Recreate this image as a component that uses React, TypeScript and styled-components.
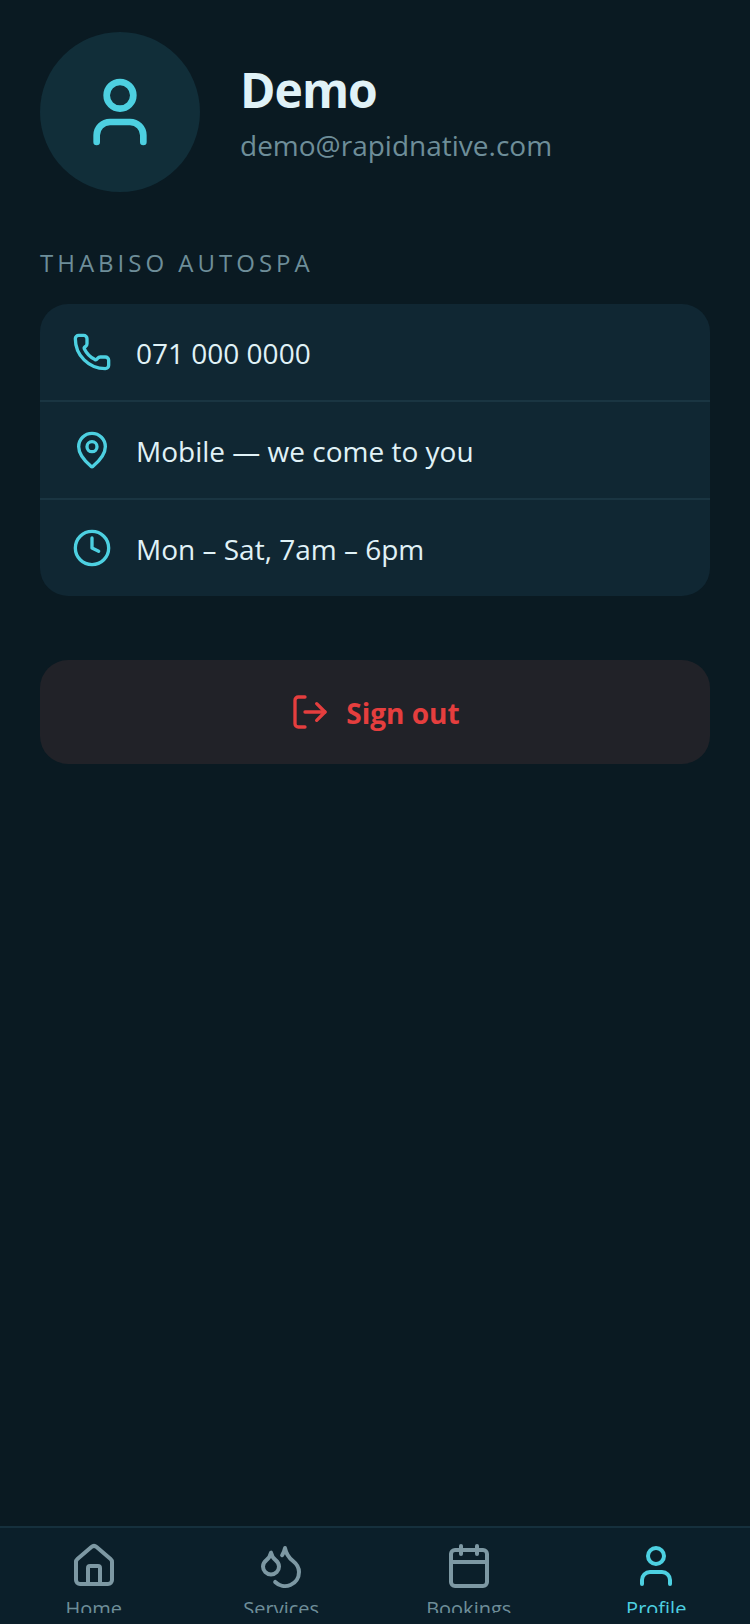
import React from "react";
import styled, { createGlobalStyle } from "styled-components";
import { Calendar, Clock, Droplets, House, LogOut, MapPin, Phone, User } from "lucide-react";

const GlobalStyle = createGlobalStyle`
	html, body {
		margin: 0;
		padding: 0;
		background: #0a1a22;
	}
	* {
		box-sizing: border-box;
	}
`;

const infoRows = [
	{ icon: Phone, text: "071 000 0000" },
	{ icon: MapPin, text: "Mobile — we come to you" },
	{ icon: Clock, text: "Mon – Sat, 7am – 6pm" },
];

const tabs = [
	{ icon: House, label: "Home" },
	{ icon: Droplets, label: "Services" },
	{ icon: Calendar, label: "Bookings" },
	{ icon: User, label: "Profile", active: true },
];

export default function App() {
	return (
		<Screen>
			<GlobalStyle />
			<Content>
				<Header>
					<Avatar>
						<User size={80} color="#4dd0e1" strokeWidth={2} />
					</Avatar>
					<div>
						<Name>Demo</Name>
						<Email>demo@rapidnative.com</Email>
					</div>
				</Header>

				<SectionLabel>THABISO AUTOSPA</SectionLabel>

				<InfoCard>
					{infoRows.map(({ icon: Icon, text }) => (
						<InfoRow key={text}>
							<Icon size={40} color="#4dd0e1" strokeWidth={2} />
							<InfoText>{text}</InfoText>
						</InfoRow>
					))}
				</InfoCard>

				<SignOut>
					<LogOut size={40} color="#e53e3e" strokeWidth={2} />
					<SignOutText>Sign out</SignOutText>
				</SignOut>
			</Content>

			<TabBar>
				{tabs.map(({ icon: Icon, label, active }) => (
					<Tab key={label}>
						<Icon size={48} color={active ? "#4dd0e1" : "#7d98a3"} strokeWidth={2} />
						<TabLabel $active={active}>{label}</TabLabel>
					</Tab>
				))}
			</TabBar>
		</Screen>
	);
}

const Screen = styled.div`
	display: flex;
	flex-direction: column;
	height: 1624px;
	width: 750px;
	overflow: hidden;
	background: #0a1a22;
	font-family: "Open Sans", "Noto Sans", sans-serif;
`;

const Content = styled.main`
	flex: 1;
	padding: 32px 40px 0;
`;

const Header = styled.header`
	display: flex;
	align-items: center;
	gap: 40px;
`;

const Avatar = styled.div`
	display: flex;
	align-items: center;
	justify-content: center;
	flex: none;
	height: 160px;
	width: 160px;
	border-radius: 50%;
	background: #112e39;
`;

const Name = styled.div`
	margin-bottom: 6px;
	color: #e0f2f7;
	font-size: 48px;
	font-weight: 700;
	letter-spacing: -1px;
	line-height: 60px;
`;

const Email = styled.div`
	color: #6e8e99;
	font-size: 28px;
	line-height: 38px;
`;

const SectionLabel = styled.div`
	margin: 55px 0 25px;
	color: #6e8e99;
	font-size: 24px;
	letter-spacing: 4px;
	line-height: 32px;
`;

const InfoCard = styled.section`
	overflow: hidden;
	border-radius: 28px;
	background: #102733;
`;

const InfoRow = styled.div`
	display: flex;
	align-items: center;
	gap: 24px;
	height: 96px;
	padding: 0 32px;

	& + & {
		height: 98px;
		border-top: 2px solid #1a3542;
	}
`;

const InfoText = styled.span`
	padding-top: 2px;
	color: #e0f2f7;
	font-size: 28px;
	line-height: 38px;
`;

const SignOut = styled.button`
	display: flex;
	align-items: center;
	justify-content: center;
	gap: 16px;
	height: 104px;
	width: 100%;
	margin-top: 64px;
	border: 0;
	border-radius: 28px;
	background: #212228;
	font-family: inherit;
`;

const SignOutText = styled.span`
	padding-top: 2px;
	color: #e53e3e;
	font-size: 28px;
	font-weight: 700;
`;

const TabBar = styled.nav`
	display: grid;
	flex: none;
	grid-template-columns: repeat(4, 1fr);
	height: 98px;
	border-top: 2px solid #16303d;
	background: #0b1f2a;
`;

const Tab = styled.div`
	display: flex;
	flex-direction: column;
	align-items: center;
	height: 85px;
	overflow: hidden;
	padding-top: 14px;

	svg {
		flex: none;
	}
`;

const TabLabel = styled.span<{ $active?: boolean }>`
	flex: none;
	margin-top: 5px;
	color: ${(p) => (p.$active ? "#4dd0e1" : "#6e8e99")};
	font-size: 20px;
	line-height: 28px;
`;
